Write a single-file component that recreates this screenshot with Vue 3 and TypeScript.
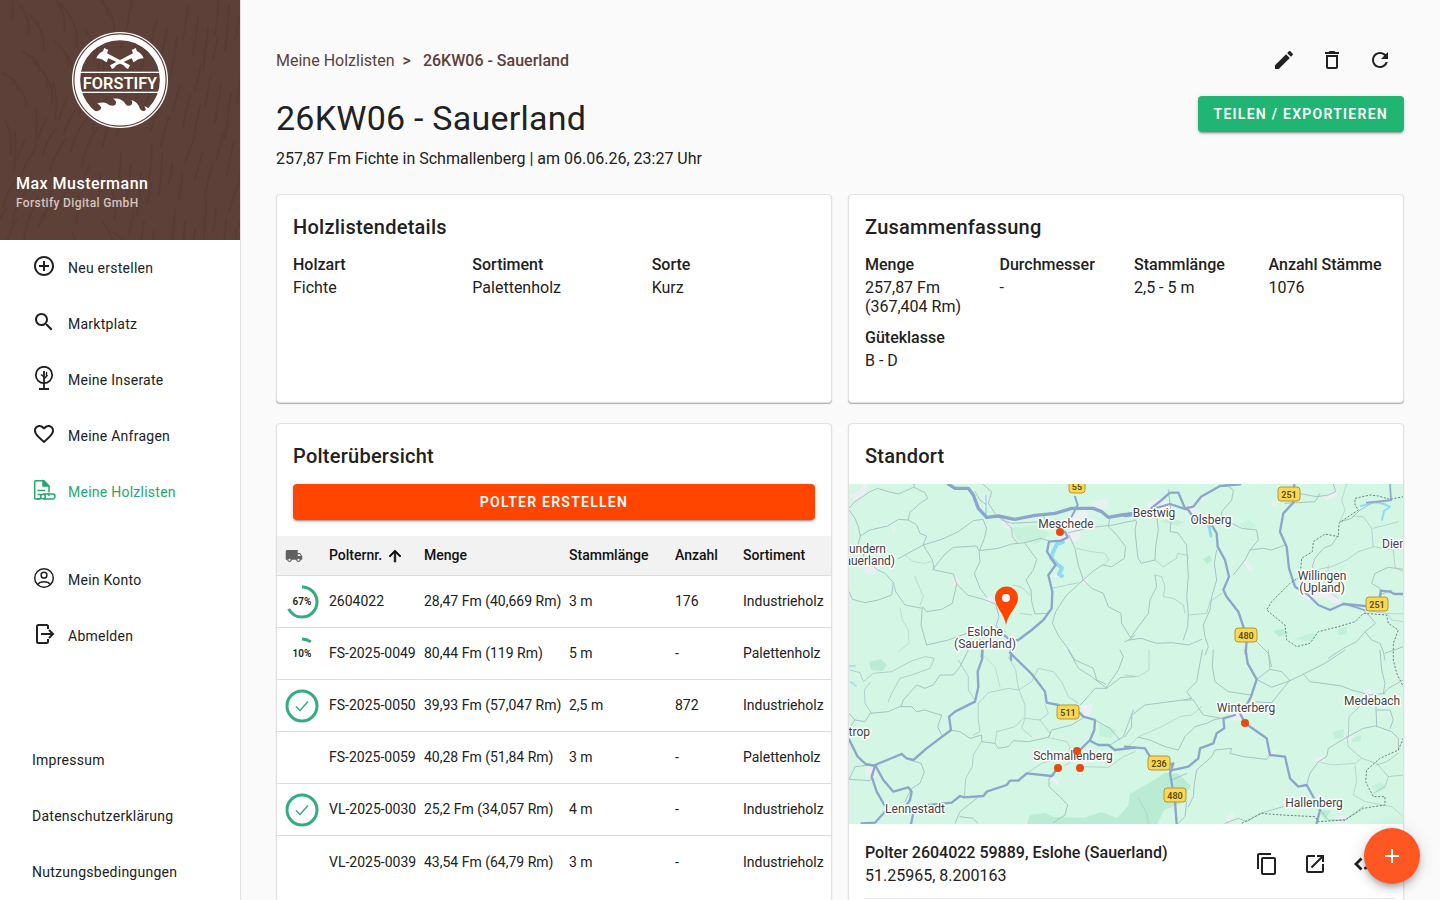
<script setup lang="ts">
interface NavItem {
  label: string
  icon: string
  active?: boolean
}

interface Polter {
  progress: number | null
  nr: string
  menge: string
  laenge: string
  anzahl: string
  sortiment: string
}

interface Fact {
  label: string
  value: string[]
}

const mainNav: NavItem[] = [
  { label: 'Neu erstellen', icon: 'add' },
  { label: 'Marktplatz', icon: 'search' },
  { label: 'Meine Inserate', icon: 'tree' },
  { label: 'Meine Anfragen', icon: 'heart' },
  { label: 'Meine Holzlisten', icon: 'list', active: true },
]

const accountNav: NavItem[] = [
  { label: 'Mein Konto', icon: 'account' },
  { label: 'Abmelden', icon: 'logout' },
]

const legalNav = ['Impressum', 'Datenschutzerklärung', 'Nutzungsbedingungen']

const icons: Record<string, string> = {
  add: 'M13 7h-2v4H7v2h4v4h2v-4h4v-2h-4V7zm-1-5C6.48 2 2 6.48 2 12s4.48 10 10 10 10-4.48 10-10S17.52 2 12 2zm0 18c-4.41 0-8-3.59-8-8s3.59-8 8-8 8 3.59 8 8-3.59 8-8 8z',
  search:
    'M15.5 14h-.79l-.28-.27C15.41 12.59 16 11.11 16 9.5 16 5.91 13.09 3 9.5 3S3 5.91 3 9.5 5.91 16 9.5 16c1.61 0 3.09-.59 4.23-1.57l.27.28v.79l5 4.99L20.49 19l-4.99-5zm-6 0C7.01 14 5 11.99 5 9.5S7.01 5 9.5 5 14 7.01 14 9.5 11.99 14 9.5 14z',
  heart:
    'M16.5 3c-1.74 0-3.41.81-4.5 2.09C10.91 3.81 9.24 3 7.5 3 4.42 3 2 5.42 2 8.5c0 3.78 3.4 6.86 8.55 11.54L12 21.35l1.45-1.32C18.6 15.36 22 12.28 22 8.5 22 5.42 19.58 3 16.5 3zm-4.4 15.55l-.1.1-.1-.1C7.14 14.24 4 11.39 4 8.5 4 6.5 5.5 5 7.5 5c1.54 0 3.04.99 3.57 2.36h1.87C13.46 5.99 14.96 5 16.5 5c2 0 3.5 1.5 3.5 3.5 0 2.89-3.14 5.74-7.9 10.05z',
}

const details: Fact[] = [
  { label: 'Holzart', value: ['Fichte'] },
  { label: 'Sortiment', value: ['Palettenholz'] },
  { label: 'Sorte', value: ['Kurz'] },
]

const summary: Fact[] = [
  { label: 'Menge', value: ['257,87 Fm', '(367,404 Rm)'] },
  { label: 'Durchmesser', value: ['-'] },
  { label: 'Stammlänge', value: ['2,5 - 5 m'] },
  { label: 'Anzahl Stämme', value: ['1076'] },
  { label: 'Güteklasse', value: ['B - D'] },
]

const polter: Polter[] = [
  { progress: 67, nr: '2604022', menge: '28,47 Fm (40,669 Rm)', laenge: '3 m', anzahl: '176', sortiment: 'Industrieholz' },
  { progress: 10, nr: 'FS-2025-0049', menge: '80,44 Fm (119 Rm)', laenge: '5 m', anzahl: '-', sortiment: 'Palettenholz' },
  { progress: 100, nr: 'FS-2025-0050', menge: '39,93 Fm (57,047 Rm)', laenge: '2,5 m', anzahl: '872', sortiment: 'Industrieholz' },
  { progress: null, nr: 'FS-2025-0059', menge: '40,28 Fm (51,84 Rm)', laenge: '3 m', anzahl: '-', sortiment: 'Palettenholz' },
  { progress: 100, nr: 'VL-2025-0030', menge: '25,2 Fm (34,057 Rm)', laenge: '4 m', anzahl: '-', sortiment: 'Industrieholz' },
  { progress: null, nr: 'VL-2025-0039', menge: '43,54 Fm (64,79 Rm)', laenge: '3 m', anzahl: '-', sortiment: 'Industrieholz' },
]

const places = [
  { name: 'Meschede', x: 217, y: 44 },
  { name: 'Bestwig', x: 305, y: 33 },
  { name: 'Olsberg', x: 362, y: 40 },
  { name: 'Willingen', x: 473, y: 96 },
  { name: '(Upland)', x: 473, y: 108 },
  { name: 'Eslohe', x: 136, y: 152 },
  { name: '(Sauerland)', x: 136, y: 164 },
  { name: 'Schmallenberg', x: 224, y: 276 },
  { name: 'Lennestadt', x: 66, y: 329 },
  { name: 'Winterberg', x: 397, y: 228 },
  { name: 'Medebach', x: 523, y: 221 },
  { name: 'Hallenberg', x: 465, y: 323 },
]

const shields = [
  { nr: '55', x: 228, y: 2 },
  { nr: '251', x: 440, y: 10 },
  { nr: '251', x: 528, y: 120 },
  { nr: '480', x: 397, y: 151 },
  { nr: '511', x: 219, y: 228 },
  { nr: '236', x: 310, y: 279 },
  { nr: '480', x: 326, y: 311 },
]

const dots = [
  [211, 48],
  [228, 267],
  [209, 284],
  [231, 284],
  [396, 239],
]

const ringLength = 2 * Math.PI * 15

/* Wood grain: short wavy strokes, flowing around a knot in the left half */
const grain: string[] = []
for (let i = 0; i < 110; i++) {
  const x = (i * 67) % 250
  const y = ((i * 113) % 260) - 15
  const lean = x < 130 ? Math.sin((y + x) / 45) * 16 : -3 - ((i * 7) % 6)
  const len = 18 + ((i * 31) % 28)
  grain.push(`M${x} ${y}q${lean + 3} ${len / 2} ${lean} ${len}`)
}
</script>

<template>
  <div class="app">
    <aside class="sidebar">
      <header class="profile">
        <svg class="grain" viewBox="0 0 240 240" preserveAspectRatio="xMidYMid slice" aria-hidden="true">
          <path v-for="(d, i) in grain" :key="i" :d="d" />
        </svg>
        <svg class="logo" viewBox="216 96 288 288" role="img" aria-label="Forstify">
          <defs>
            <clipPath id="logo-disc"><circle cx="360" cy="240" r="126" /></clipPath>
            <g id="axe">
              <path d="M318 158L390 196L384 207L377 203L371 196L317 171Z" />
              <path d="M313 144L325 150L321 160L326 172L320 187L313 183C307 178 299 175 289 175C292 165 301 157 309 154Z" />
            </g>
          </defs>
          <circle cx="360" cy="240" r="142" fill="none" stroke="#fff" stroke-width="4" />
          <circle cx="360" cy="240" r="128" fill="none" stroke="#fff" stroke-width="17" />
          <g clip-path="url(#logo-disc)" fill="#fff">
            <rect x="230" y="215" width="260" height="4" />
            <rect x="230" y="275" width="260" height="4" />
            <path d="M230 334H284C296 333 304 329 303 322C301 316 296 312 291 311C304 306 315 306 323 312C331 318 339 319 346 314C351 307 347 299 339 296C354 293 367 298 374 308C378 317 386 320 394 315C398 310 397 304 394 300C408 304 416 313 419 325C424 334 431 334 438 331C437 326 435 322 433 319C440 320 445 325 447 331H490V384H230Z" />
          </g>
          <g fill="#fff">
            <use href="#axe" />
            <use href="#axe" transform="translate(720 0) scale(-1 1)" />
          </g>
          <text x="360" y="266" text-anchor="middle" class="logo-text">FORSTIFY</text>
        </svg>
        <div class="user">
          <strong>Max Mustermann</strong>
          <span>Forstify Digital GmbH</span>
        </div>
      </header>

      <nav class="menu" aria-label="Hauptmenü">
        <a v-for="item in mainNav" :key="item.label" href="#" :class="{ active: item.active }">
          <svg class="icon" viewBox="0 0 24 24" aria-hidden="true">
            <path v-if="icons[item.icon]" :d="icons[item.icon]" />
            <g v-else-if="item.icon === 'tree'" fill="none" stroke="currentColor" stroke-width="1.800">
              <circle cx="12" cy="9" r="8.200" />
              <path d="M12 5V23M7 23H17" />
              <path d="M12 13L15.500 9M12 11L9 8.500M14.500 6V9.500" stroke-width="1.400" />
            </g>
            <g v-else fill="none" stroke="currentColor" stroke-width="1.5">
              <path d="M8 21H3.500C3 21 2.700 20.700 2.700 20V3.500C2.700 3 3 2.700 3.500 2.700H12L17 8v6.500" />
              <path d="M11 3v5h5.500z" fill="currentColor" />
              <path d="M5.500 12.500H13M5.500 16.500H9" />
              <path d="M11 16h9.500a2.300 2.300 0 0 1 0 5H11M17 16v2" />
              <circle cx="11" cy="18.500" r="2.300" />
              <path d="M5 20.800H9" />
            </g>
          </svg>
          {{ item.label }}
        </a>
      </nav>

      <nav class="menu account" aria-label="Konto">
        <a v-for="item in accountNav" :key="item.label" href="#">
          <svg class="icon" viewBox="0 0 24 24" fill="none" stroke="currentColor" aria-hidden="true">
            <g v-if="item.icon === 'account'" stroke-width="1.500">
              <circle cx="12" cy="12" r="9.300" />
              <circle cx="12" cy="9.200" r="2.900" />
              <path d="M5.500 18.500C8.500 14.800 15.500 14.800 18.500 18.500" />
            </g>
            <g v-else stroke-width="2">
              <path d="M16 7V4.500Q16 3 14.500 3H6.500Q5 3 5 4.500V19.500Q5 21 6.500 21H14.500Q16 21 16 19.500V17" />
              <path d="M9 12H21M17 8L21 12L17 16" />
            </g>
          </svg>
          {{ item.label }}
        </a>
      </nav>

      <nav class="menu legal" aria-label="Rechtliches">
        <a v-for="label in legalNav" :key="label" href="#">{{ label }}</a>
      </nav>
    </aside>

    <main class="content">
      <div class="topbar">
        <nav class="breadcrumb" aria-label="Brotkrumen">
          <a href="#">Meine Holzlisten</a>
          <b class="sep">&gt;</b>
          <b>26KW06 - Sauerland</b>
        </nav>
        <div class="tools">
          <button type="button" class="icon-button" aria-label="Bearbeiten">
            <svg class="icon" viewBox="0 0 24 24"><path d="M3 17.250V21h3.750L17.810 9.940l-3.750-3.750L3 17.250zM20.710 7.040c.39-.39.39-1.020 0-1.410l-2.340-2.340c-.39-.39-1.020-.39-1.410 0l-1.830 1.830 3.750 3.750 1.830-1.830z" /></svg>
          </button>
          <button type="button" class="icon-button" aria-label="Löschen">
            <svg class="icon" viewBox="0 0 24 24"><path d="M6 19c0 1.100.9 2 2 2h8c1.100 0 2-.9 2-2V7H6v12zM8 9h8v10H8V9zm7.500-5l-1-1h-5l-1 1H5v2h14V4z" /></svg>
          </button>
          <button type="button" class="icon-button" aria-label="Aktualisieren">
            <svg class="icon" viewBox="0 0 24 24"><path d="M17.650 6.350C16.200 4.900 14.210 4 12 4c-4.420 0-7.990 3.580-7.990 8s3.570 8 7.990 8c3.730 0 6.840-2.550 7.730-6h-2.080c-.82 2.330-3.040 4-5.650 4-3.310 0-6-2.690-6-6s2.690-6 6-6c1.660 0 3.140.69 4.220 1.780L13 11h7V4l-2.350 2.350z" /></svg>
          </button>
        </div>
      </div>

      <header class="heading">
        <div>
          <h1>26KW06 - Sauerland</h1>
          <p>257,87 Fm Fichte in Schmallenberg | am 06.06.26, 23:27 Uhr</p>
        </div>
        <button type="button" class="button green">Teilen / Exportieren</button>
      </header>

      <div class="cards">
        <section class="card">
          <h2>Holzlistendetails</h2>
          <dl class="facts three">
            <div v-for="fact in details" :key="fact.label">
              <dt>{{ fact.label }}</dt>
              <dd v-for="line in fact.value" :key="line">{{ line }}</dd>
            </div>
          </dl>
        </section>

        <section class="card">
          <h2>Zusammenfassung</h2>
          <dl class="facts four">
            <div v-for="fact in summary" :key="fact.label">
              <dt>{{ fact.label }}</dt>
              <dd v-for="line in fact.value" :key="line">{{ line }}</dd>
            </div>
          </dl>
        </section>

        <section class="card">
          <h2>Polterübersicht</h2>
          <div class="create">
            <button type="button" class="button orange">Polter erstellen</button>
          </div>
          <table>
            <colgroup>
              <col class="c-status" />
              <col class="c-nr" />
              <col class="c-menge" />
              <col class="c-laenge" />
              <col class="c-anzahl" />
              <col />
            </colgroup>
            <thead>
              <tr>
                <th scope="col" class="status" aria-label="Abfuhr">
                  <svg class="truck" viewBox="0 0 24 24"><path d="M20 8h-3V4H3c-1.100 0-2 .9-2 2v11h2c0 1.660 1.340 3 3 3s3-1.340 3-3h6c0 1.660 1.340 3 3 3s3-1.340 3-3h2v-5l-3-4zM6 18.500c-.83 0-1.500-.67-1.500-1.500s.67-1.500 1.500-1.500 1.500.67 1.500 1.500-.67 1.500-1.500 1.500zm13.500-9l1.960 2.500H17V9.500h2.500zm-1.500 9c-.83 0-1.500-.67-1.500-1.500s.67-1.500 1.500-1.500 1.500.67 1.500 1.500-.67 1.500-1.500 1.500z" /></svg>
                </th>
                <th scope="col" aria-sort="ascending">
                  <span class="sorted">Polternr.
                    <svg class="arrow" viewBox="0 0 24 24" aria-hidden="true"><path d="M4 12l1.410 1.410L11 7.830V20h2V7.830l5.580 5.590L20 12l-8-8-8 8z" /></svg>
                  </span>
                </th>
                <th scope="col">Menge</th>
                <th scope="col">Stammlänge</th>
                <th scope="col">Anzahl</th>
                <th scope="col">Sortiment</th>
              </tr>
            </thead>
            <tbody>
              <tr v-for="row in polter" :key="row.nr">
                <td class="status">
                  <svg v-if="row.progress !== null" class="ring" viewBox="0 0 34 34" role="img" :aria-label="row.progress + ' Prozent'">
                    <circle cx="17" cy="17" r="15" transform="rotate(-90 17 17)" :stroke-dasharray="`${(ringLength * row.progress) / 100} ${ringLength}`" />
                    <path v-if="row.progress === 100" d="M11 17.500L15 21.500L23 12.500" />
                    <text v-else x="17" y="20" text-anchor="middle">{{ row.progress }}%</text>
                  </svg>
                </td>
                <td>{{ row.nr }}</td>
                <td>{{ row.menge }}</td>
                <td>{{ row.laenge }}</td>
                <td>{{ row.anzahl }}</td>
                <td>{{ row.sortiment }}</td>
              </tr>
            </tbody>
          </table>
        </section>

        <section class="card">
          <h2>Standort</h2>
          <svg class="map" viewBox="0 0 554 340" preserveAspectRatio="xMidYMid slice" role="img" aria-label="Karte der Polter">
            <rect width="554" height="340" fill="#d3f7e4" />
            <!-- forests -->
            <g fill="#b9ecd2">
              <path d="M178 340L181 331L196 329L205 333L235 334L252 328L268 334L279 322L281 310L300 299L316 289L330 290L342 302L330 320L315 326L308 340Z" />
              <path d="M20 178L32 175L38 181L34 187L22 186Z" />
              <path d="M163 44L190 41L200 50L188 60L168 56Z" opacity=".5" />
              <path d="M354 75L361 71L363 77L358 80Z" />
              <path d="M424 147L434 145L440 149L430 153Z" />
              <path d="M446 155L462 149L470 152L460 158Z" opacity=".6" />
              <path d="M490 145L498 143L497 150L489 151Z" opacity=".7" />
              <path d="M484 248L495 245L494 254L486 255Z" opacity=".7" />
              <path d="M502 254L512 251L512 257L503 258Z" opacity=".7" />
              <path d="M250 240L268 246L262 254L250 252Z" opacity=".6" />
              <path d="M468 325L482 327L476 336Z" />
              <path d="M310 37L324 35L336 38L328 42Z" opacity=".6" />
              <path d="M390 40L400 36L408 42L398 46Z" opacity=".35" />
              <path d="M522 302L532 298L538 304L528 309Z" opacity=".5" />
            </g>
            <!-- built-up areas -->
            <g fill="#eceff4">
              <path d="M208 44L214 36L226 30L236 24L240 31L232 38L229 45L233 52L228 57L220 56L217 60L212 56L206 52Z" />
              <path d="M0 10L10 7L14 0H19L14 14L4 16Z" />
              <path d="M14 78L24 74L31 82L25 90L16 89Z" />
              <path d="M150 34L163 40L160 46L154 43Z" />
              <path d="M134 10L141 13L138 24L135 22Z" />
              <path d="M298 20L308 14L318 17L324 23L314 27L300 26Z" />
              <path d="M332 24L342 20L350 26L342 32Z" />
              <path d="M351 14L357 11L356 17Z" />
              <path d="M474 12L488 6L488 13L478 16Z" />
              <path d="M420 20L432 17L426 23Z" />
              <path d="M102 94L108 92L111 99L106 102Z" />
              <path d="M135 116L142 111L145 118L138 121Z" />
              <path d="M394 78L398 76L404 86L401 87Z" />
              <path d="M455 110L464 106L474 104L482 111L490 114L492 120L484 119L474 113L458 117Z" />
              <path d="M232 222L244 220L241 232L235 232Z" />
              <path d="M220 277L226 269L236 274L239 279L231 280Z" />
              <path d="M202 291L209 296L210 302L203 298Z" />
              <path d="M15 285L24 281L28 292L21 296Z" />
              <path d="M381 229L390 226L398 231L392 237L382 236Z" />
              <path d="M514 207L521 205L529 216L522 219Z" />
              <path d="M495 251L502 249L505 254L496 257Z" />
              <path d="M466 275L474 272L476 277L468 279Z" />
              <path d="M418 268L427 266L427 272L420 273Z" />
              <path d="M484 334L498 331L496 336L488 339Z" />
              <path d="M242 18L258 14L260 24L248 26Z" opacity=".7" />
              <path d="M382 328L386 332L380 338L376 335Z" />
              <path d="M210 93L206 89L203 93Z" />
              <path d="M233 96L239 93L240 98L235 101Z" />
              <path d="M42 40L48 44L44 50Z" opacity=".7" />
            </g>
            <!-- water -->
            <g fill="none" stroke="#8fdcf0" stroke-linejoin="round" stroke-linecap="round">
              <path d="M214 58L208 60L205 66L202 74L208 80L213 84L210 90L213 92" stroke-width="4" />
              <path d="M535 20L526 18L512 22M535 20L541 23L535 27L533 36" stroke-width="2" />
              <path d="M137 12L137 30M2 198L7 202M0 182H6" stroke-width="2" opacity=".7" />
              <path d="M360 42L362 52" stroke-width="3" />
            </g>

            <g class="roads" transform="translate(-4 -4) scale(.33333)">
              <g class="minor">
                <path d="M12 90L30 115L40 140L46 168L40 190L62 240L98 270L120 280L145 308L140 345L100 360L60 368L22 358L12 335" />
                <path d="M46 168L75 150L128 138L160 118L190 120L194 98L225 70L248 55L240 38L208 22L206 10" />
                <path d="M12 85L30 65L75 35L98 25L130 35L160 42L205 22" />
                <path d="M190 120L215 135L225 160L245 168L235 195L262 240L268 270L325 282L335 312L368 345L415 358L452 372L462 410L452 440L480 455" />
                <path d="M160 236L235 195L290 178L340 155L385 122L414 118L425 145L418 175L402 215L405 245L388 280L405 325L425 352" />
                <path d="M232 380L245 395L290 388L322 370L335 312M262 270L300 222L325 202L395 198L402 212L460 205L500 192L540 188L588 175L610 182" />
                <path d="M145 308L152 335L180 375L232 385L228 435L245 495L310 480L365 460" />
                <path d="M468 112L500 145L502 170L520 192M540 190L575 238L565 270L543 300L558 330L560 365L570 402L605 400L620 388" />
                <path d="M672 165L690 205L700 255L715 300L740 325L775 340L790 380L828 400L830 430L858 475L870 465" />
                <path d="M715 300L665 345L632 395L622 430L642 470L665 500L690 540L745 565L755 600L782 612" />
                <path d="M670 158L740 142L805 135L850 125L870 122M795 110L790 140L815 165L842 200L838 235L800 260L772 255L742 275L715 300" />
                <path d="M410 10L440 35L430 70L450 100L470 120L500 130L590 125L640 120M390 35L405 60L425 75M595 100L600 120L625 145" />
                <path d="M620 325L700 308M505 315L530 322L555 345M525 400L560 405" opacity=".7" />
                <path d="M165 385L172 420L190 450L192 490L160 515M180 225L205 245L240 250L258 245" opacity=".5" />
                <path d="M210 290L235 350L225 375M695 205L740 215L780 220L792 240L775 255" opacity=".6" />
              </g>
              <g class="major">
                <path d="M310 12L330 25L370 25L385 45L400 85L425 112L460 108L510 118L570 106L630 100L680 85L745 85L770 95L790 112L830 105L870 100" stroke-width="10" />
                <path d="M690 50L698 75L680 110" stroke-width="6" />
                <path d="M660 155L668 172L648 182L612 185L606 215L632 255L610 285L622 335L620 385L595 420L560 450L520 480L498 482L470 460" />
                <path d="M498 482L498 540M405 482L412 510L410 530" />
              </g>
            </g>

            <g class="roads" transform="translate(276 -4) scale(.33333)">
              <g class="minor">
                <path d="M18 105L35 125L30 150L38 230L48 250L90 240L92 200L100 150L95 105" />
                <path d="M90 285L95 320L75 360L70 400L40 440L12 480L0 485M12 480L48 475L95 490L140 488L190 495L230 478" />
                <path d="M130 30L140 110L135 155L158 158L185 195L190 290L185 350L190 400L188 440L175 480" />
                <path d="M90 240L115 260L155 235L158 220L185 225L190 235M90 285L110 290L120 320L115 350L145 355L175 375L180 400" opacity=".7" />
                <path d="M325 285L360 240L375 210L400 180L395 150L350 145L320 130L290 120L290 95L320 60L325 30L300 12" />
                <path d="M275 210L268 250L275 300L260 350L255 390L235 435L240 470L250 500L240 525" />
                <path d="M190 405L245 400L255 365L290 340" opacity=".7" />
                <path d="M375 210L415 205L440 210L480 195M640 165L620 195L595 205L570 235L562 260L575 275M645 125L680 115L705 90L740 70L800 62" />
                <path d="M625 12L632 35L610 45L575 50L530 42L510 45M480 70L570 65L585 40" />
                <path d="M570 270L620 260L665 240L700 215L745 200L740 145L715 110L680 108M745 145L820 125M745 200L805 210L810 262L835 275" opacity=".7" />
                <path d="M610 255L608 290L595 310L625 345L640 355M665 12L650 60L660 90L645 125" opacity=".6" />
                <path d="M835 268L790 262L750 280L740 310L765 325L765 345L800 330" />
                <path d="M715 390L735 410L752 430L720 455L740 480L765 490L775 515L780 540M720 455L695 485L655 505L610 535" />
                <path d="M370 480L395 485L430 520L440 560M780 520L835 500" />
                <path d="M715 390L780 400L835 402M785 400L800 420L835 425" opacity=".6" />
              </g>
              <g class="major">
                <path d="M0 108L60 100L110 60L135 38L160 38L180 85L205 80L228 50L285 18L345 13" />
                <path d="M0 105L30 98M90 85L135 72L175 85L190 90L210 120L262 138L275 160L278 200L300 240L312 290L295 330L305 350L340 395L355 440L365 480L362 520" />
                <path d="M508 12L505 68L475 100L465 155L485 200L492 265L510 320L550 345L580 375L615 390L655 372L720 378" />
                <path d="M765 350L768 332L795 335L808 342L835 342" />
                <path d="M795 12L798 60L725 68" stroke-width="5" />
                <path d="M655 370L718 390" stroke-width="5" />
              </g>
              <g class="border">
                <path d="M835 50L795 58L760 48L735 45L690 55L690 75L700 90L655 120L642 130L640 170L600 162L565 185L562 215L530 235L525 290L495 310L440 365L425 390L480 435L485 480L515 500L555 490L580 455L640 440L690 425L715 400L785 405L790 430L820 450L805 490L805 540L815 580L835 620" />
              </g>
            </g>

            <g class="roads" transform="translate(-4 166) scale(.33333)">
              <g class="minor">
                <path d="M15 60L45 68L55 95L85 70L140 65L195 35L240 20L268 25L255 55L200 75L165 85L140 130L130 155M75 98L58 120L60 160L80 190" opacity=".8" />
                <path d="M370 0L345 50L325 75L285 75L265 105L240 115L215 105L175 150L168 170L200 170L215 185L240 180L270 190L290 195L278 230L290 255" />
                <path d="M12 190L30 210L60 215L75 190L130 185L168 168M12 235L30 210" />
                <path d="M315 240L345 245L375 265L410 255L410 275L450 280L460 295L490 290L505 272L550 275L610 262L620 240L680 225L720 200" />
                <path d="M410 275L385 315L382 350L362 385L358 440M400 160L400 210L405 245L385 255M340 30L370 80L370 120L390 150" opacity=".8" />
                <path d="M400 160L430 128L490 115L520 120L560 95L580 55L625 65L650 95L670 140L700 160" opacity=".7" />
                <path d="M490 20L512 60L520 115L540 165L540 200L510 230L455 245L450 280M540 205L585 210L610 190L600 165M540 205L530 235L560 260M585 210L615 250L612 265" opacity=".7" />
                <path d="M420 20L450 50L465 110" opacity=".5" />
                <path d="M670 0L700 55L740 80L785 115L750 115L720 150L705 165M782 115L820 60L835 20L825 0M785 115L828 82L870 80" />
                <path d="M12 388L75 392L85 375M12 388L30 350L75 345M195 330L228 340L238 365L225 400L200 415L180 455" />
                <path d="M620 265L665 275L675 290L672 340L660 345M545 370L590 340L625 330M710 350L790 352L835 320L870 305" opacity=".7" />
                <path d="M628 375L612 385L612 410L645 440L668 465L660 495L625 518M395 445L345 485L330 520M345 500L385 505L398 520" />
                <path d="M795 285L835 260L850 220L865 180M750 210L795 235L825 270" />
              </g>
              <g class="major">
                <path d="M412 0L412 25L398 65L400 110L390 155L330 185L312 200L318 240L245 295L205 330L185 325L170 312L90 345" />
                <path d="M12 268L38 320L62 342L92 348L115 390L145 425L190 412L200 425L195 450L185 465" />
                <path d="M90 348L80 380L95 425L118 465M120 485L90 518L50 520M205 490L198 522" />
                <path d="M250 465L320 458L345 438L358 442L415 438L425 425L485 405L495 392L520 392L545 370L620 378L640 352" />
                <path d="M495 8L560 72L600 125L605 158L640 165M700 185L715 200L750 210L748 240L735 270L705 300M735 272L760 285L790 285L810 300L870 293" />
              </g>
            </g>

            <g class="roads" transform="translate(276 166) scale(.33333)">
              <g class="minor">
                <path d="M232 0L215 95L185 125L200 145L175 150L135 155L60 165L20 195L20 230L0 260M175 150L205 150L235 195L290 205" />
                <path d="M72 0L72 60L40 80L0 75M10 290L40 260L110 230L165 200L200 195L230 170" opacity=".6" />
                <path d="M40 262L75 270L120 290L160 300L180 260L210 230L245 220L265 210L290 205" />
                <path d="M265 0L262 50L270 95L310 125L378 135M395 88L435 58L470 65L495 92L530 75L600 40L660 0M395 88L440 112L495 92" />
                <path d="M430 0L435 58M535 72L555 95L650 108L680 120L735 135L780 130M380 155L440 158L495 90" />
                <path d="M765 0L770 60L780 100L775 130L790 115L835 90M752 140L755 230M752 180L795 180L805 210L795 235" />
                <path d="M820 300L820 265L800 245L752 228L715 235L665 262L610 295L605 320L580 335L555 370L545 405" />
                <path d="M665 258L670 290L710 325L755 340L790 380L780 410L745 430M670 262L672 200L735 140M820 310L785 335L755 345M790 380L835 375" opacity=".8" />
                <path d="M580 335L620 345L690 340L710 325M690 345L695 395L685 435L720 455L800 470L835 500" opacity=".6" />
                <path d="M260 320L270 300L320 295L315 310L355 320L425 328L435 315M260 320L215 360L208 400L205 440L190 470" />
                <path d="M140 390L185 370M185 455L180 500L160 520M300 520L340 505L365 515L405 490L475 470M585 478L610 510L660 510L715 470" />
                <path d="M40 445L65 490L70 520" opacity=".6" />
              </g>
              <g class="major">
                <path d="M362 0L368 40L395 88L378 140L365 165M345 190L360 220L425 265L435 315L480 320L495 385L520 410L545 405L570 450M585 480L575 520" />
                <path d="M0 290L60 295L75 320M135 362L190 350L220 325L225 295L265 280L275 250L298 235L295 205L330 195" />
                <path d="M130 345L145 340L135 370L142 410M150 455L155 522" />
              </g>
              <g class="border">
                <path d="M835 265L820 300L765 325L725 360L722 395L745 440L780 440L780 465L745 470L715 475L660 510L580 515L570 500L470 495L410 490L350 520" />
              </g>
            </g>

            <g class="places">
              <text x="37" y="69" text-anchor="end">Sundern</text>
              <text x="46" y="81" text-anchor="end">(Sauerland)</text>
              <text x="21" y="252" text-anchor="end">Finnentrop</text>
              <text x="533" y="64">Diemelsee</text>
              <text v-for="place in places" :key="place.name + place.x" :x="place.x" :y="place.y" text-anchor="middle">{{ place.name }}</text>
            </g>
            <g v-for="(shield, i) in shields" :key="i" class="shield">
              <rect :x="shield.x - (shield.nr.length === 2 ? 8 : 11)" :y="shield.y - 7" :width="shield.nr.length === 2 ? 16 : 22" height="14" rx="3" />
              <text :x="shield.x" :y="shield.y + 4" text-anchor="middle">{{ shield.nr }}</text>
            </g>
            <circle v-for="(dot, i) in dots" :key="i" :cx="dot[0]" :cy="dot[1]" r="4" fill="#e8490f" />
            <path d="M157 141C155 129 146 123 146 114A11 11 0 0 1 169 114C169 123 159 129 157 141Z" fill="#ff4500" />
            <circle cx="157" cy="114" r="4" fill="#fff" />
          </svg>

          <div class="location">
            <div class="address">
              <b>Polter 2604022 59889, Eslohe (Sauerland)</b>
              <span>51.25965, 8.200163</span>
            </div>
            <button type="button" class="icon-button" aria-label="Kopieren">
              <svg class="icon" viewBox="0 0 24 24"><path d="M16 1H4c-1.100 0-2 .9-2 2v14h2V3h12V1zm3 4H8c-1.100 0-2 .9-2 2v14c0 1.100.9 2 2 2h11c1.100 0 2-.9 2-2V7c0-1.100-.9-2-2-2zm0 16H8V7h11v14z" /></svg>
            </button>
            <button type="button" class="icon-button" aria-label="Öffnen">
              <svg class="icon" viewBox="0 0 24 24"><path d="M19 19H5V5h7V3H5c-1.110 0-2 .9-2 2v14c0 1.100.89 2 2 2h14c1.100 0 2-.9 2-2v-7h-2v7zM14 3v2h3.590l-9.830 9.830 1.410 1.410L19 6.410V10h2V3h-7z" /></svg>
            </button>
            <button type="button" class="icon-button" aria-label="Koordinaten">
              <svg class="icon" viewBox="0 0 24 24"><path d="M10.500 6.500L5 12L10.500 17.500M18.500 6.500L24 12L18.500 17.500" fill="none" stroke="currentColor" stroke-width="2.800" /><circle cx="14.500" cy="16" r="1.500" /></svg>
            </button>
          </div>
          <hr />
          <div class="location">
            <div class="address">
              <b>Polter FS-2025-0049</b>
            </div>
          </div>
        </section>
      </div>
    </main>

    <button type="button" class="fab" aria-label="Hinzufügen">
      <svg class="icon" viewBox="0 0 24 24"><path d="M19 13h-6v6h-2v-6H5v-2h6V5h2v6h6v2z" /></svg>
    </button>
  </div>
</template>

<style>
body {
  margin: 0;
}
</style>

<style scoped>
.app {
  display: flex;
  height: 100vh;
  overflow: hidden;
  background: #fafafa;
  color: #212121;
  font: 400 16px/19px Roboto, "Noto Sans", sans-serif;
}

.app * {
  box-sizing: border-box;
}

a {
  color: inherit;
  text-decoration: none;
}

button {
  border: 0;
  padding: 0;
  font: inherit;
  color: inherit;
  cursor: pointer;
}

.icon {
  display: block;
  width: 24px;
  height: 24px;
  flex: none;
  fill: currentColor;
}

svg.icon[fill="none"] {
  fill: none;
}

.sidebar {
  display: flex;
  flex-direction: column;
  flex: none;
  width: 241px;
  background: #fff;
  border-right: 1px solid #e0e0e0;
}

.profile {
  position: relative;
  display: flex;
  flex-direction: column;
  justify-content: space-between;
  flex: none;
  width: 240px;
  height: 240px;
  padding: 32px 16px 28px;
  background: #5d4037;
  color: #fff;
}

.grain {
  position: absolute;
  inset: 0;
  width: 100%;
  height: 100%;
  fill: none;
  stroke: #513730;
  stroke-width: 2;
  stroke-linecap: round;
  opacity: 0.35;
}

.logo {
  position: relative;
  align-self: center;
  width: 96px;
  height: 96px;
}

.logo-text {
  fill: #fff;
  font-size: 49px;
  font-weight: 600;
}

.user {
  position: relative;
  display: flex;
  flex-direction: column;
}

.user strong {
  font-weight: 500;
  line-height: 20px;
  letter-spacing: 0.03em;
}

.user span {
  color: #d3c5c0;
  font-size: 12px;
  font-weight: 500;
  line-height: 18px;
  letter-spacing: 0.03em;
}

.menu {
  display: flex;
  flex-direction: column;
}

.menu a {
  display: flex;
  align-items: center;
  gap: 12px;
  height: 56px;
  padding: 0 32px;
  font-size: 14px;
  letter-spacing: 0.018em;
}

.menu .icon {
  margin-bottom: 4px;
}

.menu a.active {
  color: #26a671;
}

.account {
  margin-top: 32px;
}

.legal {
  margin-top: auto;
}

.content {
  flex: 1;
  min-width: 0;
  padding: 36px 36px 0 35px;
}

.topbar {
  display: flex;
  align-items: center;
  justify-content: space-between;
}

.breadcrumb {
  display: flex;
  color: #5d4037;
}

.breadcrumb b {
  font-weight: 500;
}

.breadcrumb .sep {
  margin: 0 12px 0 8px;
}

.tools {
  display: flex;
}

.icon-button {
  display: grid;
  place-items: center;
  width: 48px;
  height: 48px;
  background: none;
}

.heading {
  display: flex;
  align-items: flex-start;
  justify-content: space-between;
  padding: 12px 0 26px;
}

h1 {
  margin: 0;
  font-size: 34px;
  font-weight: 400;
  line-height: 44px;
  letter-spacing: 0.007em;
}

.heading p {
  margin: 9px 0 0;
}

.button {
  height: 36px;
  padding: 0 16px;
  border-radius: 4px;
  color: #fff;
  font-size: 14px;
  font-weight: 600;
  letter-spacing: 0.09em;
  text-transform: uppercase;
  box-shadow: 0 3px 1px -2px rgba(0, 0, 0, 0.2), 0 2px 2px rgba(0, 0, 0, 0.14), 0 1px 5px rgba(0, 0, 0, 0.12);
}

.green {
  background: #21b573;
}

.orange {
  width: 100%;
  background: #ff4500;
}

.cards {
  display: grid;
  grid-template-columns: repeat(2, minmax(0, 1fr));
  grid-template-rows: auto 520px;
  gap: 20px 16px;
}

.card {
  overflow: hidden;
  background: #fff;
  border: 1px solid #e0e0e0;
  border-radius: 4px;
  box-shadow: 0 1px 1px rgba(0, 0, 0, 0.3);
}

h2 {
  margin: 0;
  padding: 20px 16px 16px;
  font-size: 20px;
  font-weight: 500;
  line-height: 24px;
  letter-spacing: 0.0125em;
}

.facts {
  display: grid;
  gap: 12px 16px;
  margin: 0;
  padding: 0 16px 32px;
}

.three {
  grid-template-columns: repeat(3, minmax(0, 1fr));
}

.four {
  grid-template-columns: repeat(4, minmax(0, 1fr));
}

.facts div {
  min-width: 0;
  white-space: nowrap;
}

.facts dt {
  margin-bottom: 4px;
  font-weight: 500;
}

.facts dd {
  margin: 0;
}

.create {
  padding: 0 16px 16px;
}

table {
  width: 100%;
  table-layout: fixed;
  border-collapse: separate;
  border-spacing: 0;
  font-size: 14px;
  white-space: nowrap;
}

.c-status {
  width: 52px;
}

.c-nr {
  width: 95px;
}

.c-menge {
  width: 145px;
}

.c-laenge {
  width: 106px;
}

.c-anzahl {
  width: 68px;
}

th,
td {
  padding: 0;
  text-align: left;
  border-bottom: 1px solid #dcdcdc;
}

th {
  height: 40px;
  background: #f2f2f2;
  color: #111;
  font-weight: 500;
}

td {
  height: 52px;
}

tbody tr:last-child td {
  border-bottom: 0;
}

.status {
  padding-left: 8px;
}

.truck {
  display: block;
  width: 18px;
  height: 18px;
  fill: #616161;
}

.sorted {
  display: flex;
  align-items: center;
  gap: 4px;
}

.arrow {
  width: 18px;
  height: 18px;
  fill: #111;
  stroke: #111;
}

.ring {
  display: block;
  width: 34px;
  height: 34px;
}

.ring circle {
  fill: none;
  stroke: #34ac7f;
  stroke-width: 3;
}

.ring path {
  fill: none;
  stroke: #34ac7f;
  stroke-width: 1.5;
}

.ring text {
  fill: #212121;
  font-size: 10px;
  font-weight: 600;
}

.map {
  display: block;
  width: 100%;
  height: 340px;
}

.roads {
  fill: none;
  stroke-linejoin: round;
  stroke-linecap: round;
}

.minor {
  stroke: #a9c1c5;
  stroke-width: 3;
}

.major {
  stroke: #8ca6cb;
  stroke-width: 7;
}

.border {
  stroke: #68837b;
  stroke-width: 3;
  stroke-dasharray: 4 7;
}

.places {
  fill: #404244;
  stroke: #fff;
  stroke-width: 3px;
  stroke-linejoin: round;
  paint-order: stroke;
  font-size: 12px;
}

.shield rect {
  fill: #f9d855;
  stroke: #b8962e;
}

.shield text {
  fill: #5a4a12;
  font-size: 9px;
  font-weight: 600;
}

.location {
  display: flex;
  align-items: center;
  height: 74px;
  padding: 6px 16px 0;
}

.address {
  display: flex;
  flex: 1;
  flex-direction: column;
  gap: 4px;
  min-width: 0;
  white-space: nowrap;
}

.address b {
  font-weight: 500;
}

hr {
  margin: 0 8px 0 16px;
  border: 0;
  border-top: 1px solid #e6e6e6;
}

.fab {
  position: fixed;
  right: 20px;
  bottom: 16px;
  display: grid;
  place-items: center;
  width: 56px;
  height: 56px;
  border-radius: 50%;
  background: #ff5722;
  color: #fff;
  box-shadow: 0 3px 5px -1px rgba(0, 0, 0, 0.2), 0 6px 10px rgba(0, 0, 0, 0.14), 0 1px 18px rgba(0, 0, 0, 0.12);
}
</style>
